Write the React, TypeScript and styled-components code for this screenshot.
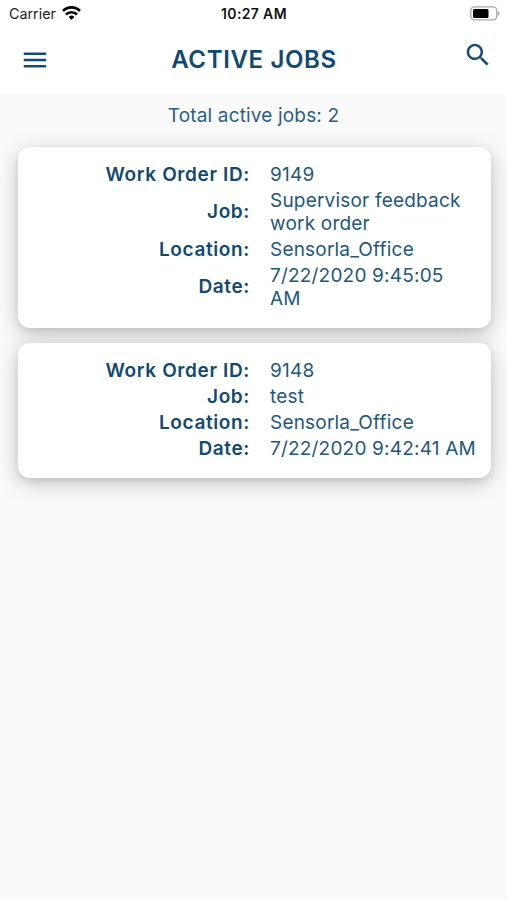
import React from "react";
import styled, { createGlobalStyle } from "styled-components";

const Global = createGlobalStyle`
  * { box-sizing: border-box; }
  body { margin: 0; background: #fafafa; font-family: Inter, sans-serif; color: #134c78; }
`;
const Screen = styled.div`min-height: 900px; background: #fafafa;`;
const StatusBar = styled.div`
  height: 27px; background: #fff; color: #222; display: grid;
  grid-template-columns: 1fr auto 1fr; align-items: center; padding: 0 7px 0 9px;
  font-size: 14.3px; line-height: 26px;
`;
const Carrier = styled.div`display: flex; align-items: center; gap: 6px;
  svg { margin-top: -1px; }
`;
const Time = styled.div`font-weight: 600; font-size: 14px; letter-spacing: 0.35px; color: #111; margin-left: -1px;`;
const Battery = styled.div`display: flex; justify-content: flex-end;`;
const AppBar = styled.header`
  height: 67px; background: #fff; display: grid; grid-template-columns: 30px 1fr 30px;
  align-items: start; padding: 0 14px 0 20px;
`;
const IconButton = styled.button<{ $top: number }>`
  width: 30px; height: 30px; padding: 0; margin-top: ${(p) => p.$top}px;
  border: 0; background: none; color: #134c78;
  svg { display: block; width: 30px; height: 30px; fill: currentColor; }
`;
const Title = styled.h1`
  margin: 17px 0 0; padding-right: 5px; text-align: center; font-size: 24px; line-height: 32px;
  font-weight: 600; letter-spacing: 0.65px; color: #0d4a75;
`;
const Total = styled.div`
  height: 53px; padding-top: 10px; text-align: center; font-size: 19px; line-height: 24px;
  letter-spacing: 0.16px; color: #285f88;
`;
const Cards = styled.main`display: flex; flex-direction: column; gap: 15px; padding: 0 16.5px 0 17.5px;`;
const Card = styled.section`
  background: #fff; border-radius: 12px; padding: 14.8px 11px 16.6px 0;
  box-shadow: 0 5px 22px rgba(0, 0, 0, 0.22), 0 3px 6px rgba(0, 0, 0, 0.08);
`;
const Row = styled.div`
  display: grid; grid-template-columns: 232.5px 1fr; column-gap: 20px; align-items: center;
  padding: 1.2px 0; font-size: 19px; line-height: 23.4px;
`;
const Label = styled.div`text-align: right; font-weight: 600; letter-spacing: 0.63px; color: #0f4a76;`;
const Value = styled.div`letter-spacing: 0.2px; color: #20587f;`;

const jobs = [
  { id: "9149", job: "Supervisor feedback work order", location: "Sensorla_Office", date: "7/22/2020 9:45:05 AM" },
  { id: "9148", job: "test", location: "Sensorla_Office", date: "7/22/2020 9:42:41 AM" },
];

export default function App() {
  return (
    <Screen>
      <Global />
      <StatusBar>
        <Carrier>
          Carrier
          <svg width="19" height="14" viewBox="0 0 19 14" fill="none" stroke="#000" strokeWidth="2.7">
            <path d="M1 5a12 12 0 0 1 17 0M4 8.5a7.8 7.8 0 0 1 11 0" />
            <path d="M6.6 11a4.1 4.1 0 0 1 5.8 0L9.5 14z" fill="#000" stroke="none" />
          </svg>
        </Carrier>
        <Time>10:27 AM</Time>
        <Battery>
          <svg width="30" height="15" viewBox="0 0 30 15">
            <rect x=".8" y=".9" width="26" height="13" rx="3.8" fill="none" stroke="#aaa" strokeWidth="1.4" />
            <rect x="3" y="3" width="15.5" height="9" rx="1.5" />
            <path d="M28 5q3.2 2.5 0 5z" fill="#aaa" />
          </svg>
        </Battery>
      </StatusBar>
      <AppBar>
        <IconButton $top={17.5} aria-label="Menu">
          <svg viewBox="0 0 24 24"><path d="M3 18h18v-2H3v2zm0-5h18v-2H3v2zm0-7v2h18V6H3z" /></svg>
        </IconButton>
        <Title>ACTIVE JOBS</Title>
        <IconButton $top={12.5} aria-label="Search">
          <svg viewBox="0 0 24 24"><path d="M15.5 14h-.79l-.28-.27C15.41 12.59 16 11.11 16 9.5 16 5.91 13.09 3 9.5 3S3 5.91 3 9.5 5.91 16 9.5 16c1.61 0 3.09-.59 4.23-1.57l.27.28v.79l5 4.99L20.49 19l-4.99-5zm-6 0C7.01 14 5 11.99 5 9.5S7.01 5 9.5 5 14 7.01 14 9.5 11.99 14 9.5 14z" /></svg>
        </IconButton>
      </AppBar>
      <Total>Total active jobs: 2</Total>
      <Cards>
        {jobs.map((j) => (
          <Card key={j.id}>
            <Row><Label>Work Order ID:</Label><Value>{j.id}</Value></Row>
            <Row><Label>Job:</Label><Value>{j.job}</Value></Row>
            <Row><Label>Location:</Label><Value>{j.location}</Value></Row>
            <Row><Label>Date:</Label><Value>{j.date}</Value></Row>
          </Card>
        ))}
      </Cards>
    </Screen>
  );
}
